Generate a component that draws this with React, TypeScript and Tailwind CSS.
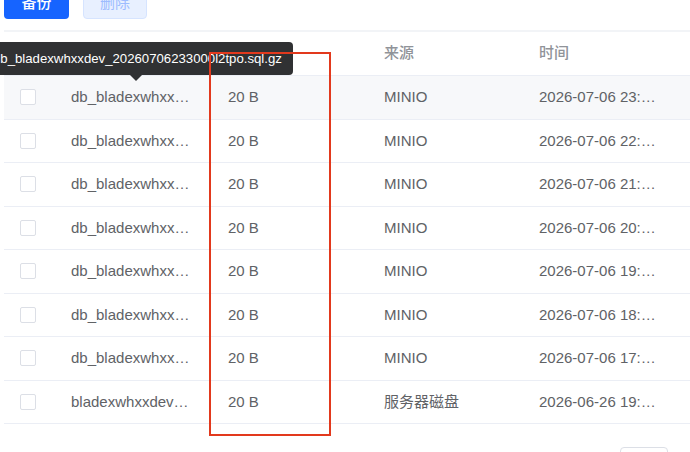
const rows = [
  { name: "db_bladexwhxxdev_20260706233000l2tpo.sql.gz", size: "20 B", source: "MINIO", time: "2026-07-06 23:30:00" },
  { name: "db_bladexwhxxdev_20260706223000ab3kd.sql.gz", size: "20 B", source: "MINIO", time: "2026-07-06 22:30:00" },
  { name: "db_bladexwhxxdev_20260706213000x81pq.sql.gz", size: "20 B", source: "MINIO", time: "2026-07-06 21:30:00" },
  { name: "db_bladexwhxxdev_20260706203000m2zt0.sql.gz", size: "20 B", source: "MINIO", time: "2026-07-06 20:30:00" },
  { name: "db_bladexwhxxdev_20260706193000q9we1.sql.gz", size: "20 B", source: "MINIO", time: "2026-07-06 19:30:00" },
  { name: "db_bladexwhxxdev_20260706183000k4yu7.sql.gz", size: "20 B", source: "MINIO", time: "2026-07-06 18:30:00" },
  { name: "db_bladexwhxxdev_20260706173000p0ci2.sql.gz", size: "20 B", source: "MINIO", time: "2026-07-06 17:30:00" },
  { name: "bladexwhxxdev_20260626193000.sql.gz", size: "20 B", source: "服务器磁盘", time: "2026-06-26 19:30:00" },
];

const Checkbox = () => (
  <span className="block h-4 w-4 rounded-[2px] border border-[#dcdfe6] bg-white"></span>
);

const App = () => {
  return (
    <div className="relative h-[452px] w-[690px] overflow-hidden bg-white font-['Liberation_Sans','Noto_Sans_CJK_SC',sans-serif] text-[15px] text-[#606266]">
      <div className="-mt-[13px] flex gap-[14px] pl-[4px]">
        <button className="h-8 w-[65px] rounded-[4px] bg-[#1664ff] font-medium text-white">
          备份
        </button>
        <button className="h-8 w-[64px] rounded-[4px] border border-[#d6e4ff] bg-[#e8f0ff] text-[#9dbcff]">
          删除
        </button>
      </div>

      <div className="ml-[4px] mt-[11px] border-t-2 border-[#f2f4f7]">
        <div className="grid h-[44px] grid-cols-[55px_157px_156px_155px_144px] items-center border-b border-[#ebeef5] font-medium text-[#909399]">
          <div></div>
          <div className="px-3">文件名</div>
          <div className="px-3">大小</div>
          <div className="px-3">来源</div>
          <div className="px-3">时间</div>
        </div>
        {rows.map((row, i) => (
          <div
            key={row.name}
            className={`grid h-[43.5px] grid-cols-[55px_157px_156px_155px_144px] items-center border-b border-[#ebeef5] ${
              i === 0 ? "bg-[#f7f8fa]" : "bg-white"
            }`}
          >
            <div className="pl-4">
              <Checkbox />
            </div>
            <div className="px-3">
              <span className="block w-[123px] truncate">{row.name}</span>
            </div>
            <div className="px-3">{row.size}</div>
            <div className="px-3">{row.source}</div>
            <div className="px-3">
              <span className="block w-[120px] truncate">{row.time}</span>
            </div>
          </div>
        ))}
      </div>

      <div className="mt-[23px] flex justify-end pr-[22px]">
        <div className="h-7 w-[48px] rounded-[4px] border border-[#dcdfe6]"></div>
      </div>

      {/* tooltip over the first file name */}
      <div className="absolute left-[-18px] top-[42px] flex h-[33px] items-center whitespace-nowrap rounded-[4px] bg-[#303133] px-[11px] text-[13.2px] text-white">
        db_bladexwhxxdev_20260706233000l2tpo.sql.gz
        <span className="absolute left-[148px] top-full h-0 w-0 border-x-[6px] border-t-[6px] border-x-transparent border-t-[#303133]"></span>
      </div>

      {/* red annotation box */}
      <div className="pointer-events-none absolute left-[209px] top-[52px] h-[384px] w-[122px] border-2 border-[#e2391d]"></div>
    </div>
  );
};

export default App;
